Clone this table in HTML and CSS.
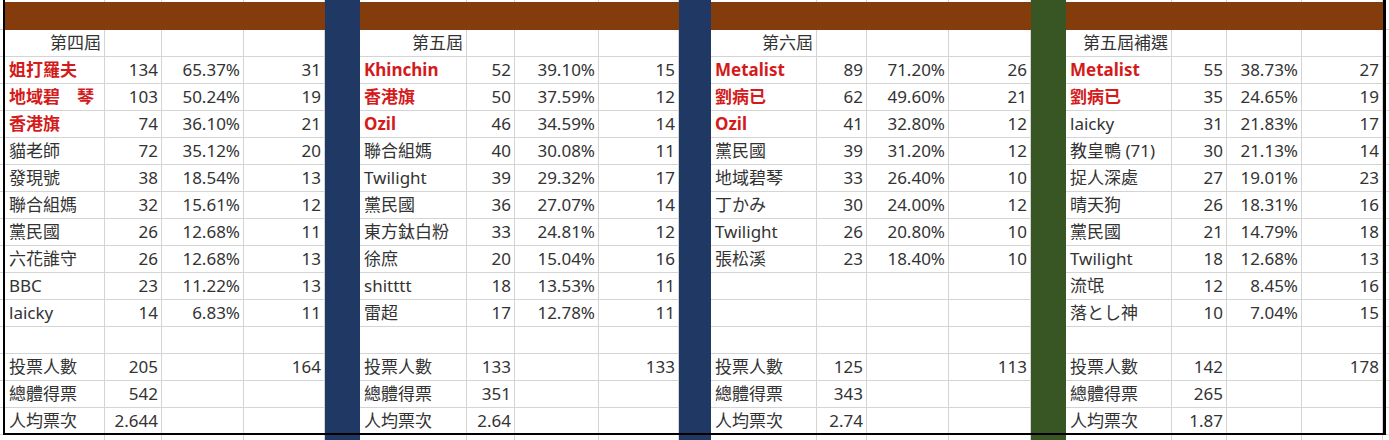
FILE: index.html
```html
<!DOCTYPE html>
<html lang="zh-Hant">
<head>
<meta charset="utf-8">
<title>選舉結果</title>
<link rel="stylesheet" href="styles.css">
</head>
<body>
<main class="wrap">
  <div class="sheet">
    <!-- row 1: top stub -->
    <span class="t s"></span><span class="t"></span><span class="t"></span><span class="t"></span><span class="t"></span>
    <span class="t"></span><span class="t"></span><span class="t"></span><span class="t"></span>
    <span class="t"></span><span class="t"></span><span class="t"></span><span class="t"></span>
    <span class="t"></span><span class="t"></span><span class="t"></span><span class="t"></span>
    <span class="t s"></span>
    <!-- row 2: brown bar row stubs -->
    <span class="s"></span><span class="s"></span>
    <!-- row 3: headers -->
    <span class="s"></span>
    <span>第四屆</span><span></span><span></span><span></span>
    <span>第五屆</span><span></span><span></span><span></span>
    <span>第六屆</span><span></span><span></span><span></span>
    <span>第五屆補選</span><span></span><span></span><span></span>
    <span class="s"></span>
    <!-- data 1 -->
    <span class="s"></span>
    <span class="n w">姐打羅夫</span><span>134</span><span>65.37%</span><span>31</span>
    <span class="n w">Khinchin</span><span>52</span><span>39.10%</span><span>15</span>
    <span class="n w">Metalist</span><span>89</span><span>71.20%</span><span>26</span>
    <span class="n w">Metalist</span><span>55</span><span>38.73%</span><span>27</span>
    <span class="s"></span>
    <!-- data 2 -->
    <span class="s"></span>
    <span class="n w">地域碧　琴</span><span>103</span><span>50.24%</span><span>19</span>
    <span class="n w">香港旗</span><span>50</span><span>37.59%</span><span>12</span>
    <span class="n w">劉病已</span><span>62</span><span>49.60%</span><span>21</span>
    <span class="n w">劉病已</span><span>35</span><span>24.65%</span><span>19</span>
    <span class="s"></span>
    <!-- data 3 -->
    <span class="s"></span>
    <span class="n w">香港旗</span><span>74</span><span>36.10%</span><span>21</span>
    <span class="n w">Ozil</span><span>46</span><span>34.59%</span><span>14</span>
    <span class="n w">Ozil</span><span>41</span><span>32.80%</span><span>12</span>
    <span class="n">laicky</span><span>31</span><span>21.83%</span><span>17</span>
    <span class="s"></span>
    <!-- data 4 -->
    <span class="s"></span>
    <span class="n">貓老師</span><span>72</span><span>35.12%</span><span>20</span>
    <span class="n">聯合組媽</span><span>40</span><span>30.08%</span><span>11</span>
    <span class="n">黨民國</span><span>39</span><span>31.20%</span><span>12</span>
    <span class="n">教皇鴨 (71)</span><span>30</span><span>21.13%</span><span>14</span>
    <span class="s"></span>
    <!-- data 5 -->
    <span class="s"></span>
    <span class="n">發現號</span><span>38</span><span>18.54%</span><span>13</span>
    <span class="n">Twilight</span><span>39</span><span>29.32%</span><span>17</span>
    <span class="n">地域碧琴</span><span>33</span><span>26.40%</span><span>10</span>
    <span class="n">捉人深處</span><span>27</span><span>19.01%</span><span>23</span>
    <span class="s"></span>
    <!-- data 6 -->
    <span class="s"></span>
    <span class="n">聯合組媽</span><span>32</span><span>15.61%</span><span>12</span>
    <span class="n">黨民國</span><span>36</span><span>27.07%</span><span>14</span>
    <span class="n">丁かみ</span><span>30</span><span>24.00%</span><span>12</span>
    <span class="n">晴天狗</span><span>26</span><span>18.31%</span><span>16</span>
    <span class="s"></span>
    <!-- data 7 -->
    <span class="s"></span>
    <span class="n">黨民國</span><span>26</span><span>12.68%</span><span>11</span>
    <span class="n">東方鈦白粉</span><span>33</span><span>24.81%</span><span>12</span>
    <span class="n">Twilight</span><span>26</span><span>20.80%</span><span>10</span>
    <span class="n">黨民國</span><span>21</span><span>14.79%</span><span>18</span>
    <span class="s"></span>
    <!-- data 8 -->
    <span class="s"></span>
    <span class="n">六花誰守</span><span>26</span><span>12.68%</span><span>13</span>
    <span class="n">徐庶</span><span>20</span><span>15.04%</span><span>16</span>
    <span class="n">張松溪</span><span>23</span><span>18.40%</span><span>10</span>
    <span class="n">Twilight</span><span>18</span><span>12.68%</span><span>13</span>
    <span class="s"></span>
    <!-- data 9 -->
    <span class="s"></span>
    <span class="n">BBC</span><span>23</span><span>11.22%</span><span>13</span>
    <span class="n">shitttt</span><span>18</span><span>13.53%</span><span>11</span>
    <span class="n"></span><span></span><span></span><span></span>
    <span class="n">流氓</span><span>12</span><span>8.45%</span><span>16</span>
    <span class="s"></span>
    <!-- data 10 -->
    <span class="s"></span>
    <span class="n">laicky</span><span>14</span><span>6.83%</span><span>11</span>
    <span class="n">雷超</span><span>17</span><span>12.78%</span><span>11</span>
    <span class="n"></span><span></span><span></span><span></span>
    <span class="n">落とし神</span><span>10</span><span>7.04%</span><span>15</span>
    <span class="s"></span>
    <!-- empty row -->
    <span class="s"></span>
    <span></span><span></span><span></span><span></span>
    <span></span><span></span><span></span><span></span>
    <span></span><span></span><span></span><span></span>
    <span></span><span></span><span></span><span></span>
    <span class="s"></span>
    <!-- voters -->
    <span class="s"></span>
    <span class="n">投票人數</span><span>205</span><span></span><span>164</span>
    <span class="n">投票人數</span><span>133</span><span></span><span>133</span>
    <span class="n">投票人數</span><span>125</span><span></span><span>113</span>
    <span class="n">投票人數</span><span>142</span><span></span><span>178</span>
    <span class="s"></span>
    <!-- total votes -->
    <span class="s"></span>
    <span class="n">總體得票</span><span>542</span><span></span><span></span>
    <span class="n">總體得票</span><span>351</span><span></span><span></span>
    <span class="n">總體得票</span><span>343</span><span></span><span></span>
    <span class="n">總體得票</span><span>265</span><span></span><span></span>
    <span class="s"></span>
    <!-- average -->
    <span class="s"></span>
    <span class="n">人均票次</span><span>2.644</span><span></span><span></span>
    <span class="n">人均票次</span><span>2.64</span><span></span><span></span>
    <span class="n">人均票次</span><span>2.74</span><span></span><span></span>
    <span class="n">人均票次</span><span>1.87</span><span></span><span></span>
    <span class="s"></span>
    <!-- bottom stub -->
    <span class="b s"></span><span class="b"></span><span class="b"></span><span class="b"></span><span class="b"></span>
    <span class="b"></span><span class="b"></span><span class="b"></span><span class="b"></span>
    <span class="b"></span><span class="b"></span><span class="b"></span><span class="b"></span>
    <span class="b"></span><span class="b"></span><span class="b"></span><span class="b"></span>
    <span class="b s"></span>

    <div class="bar"></div>
    <div class="sep blue col6"></div>
    <div class="sep blue col11"></div>
    <div class="sep green col16"></div>
  </div>
  <div class="frame"></div>
</main>
</body>
</html>
```
FILE: styles.css
```css
html, body {
  margin: 0;
  padding: 0;
  background: #ffffff;
}

body {
  width: 1389px;
  height: 440px;
  overflow: hidden;
  font-family: "Noto Sans", "Noto Sans CJK TC", sans-serif;
  font-size: 17px;
  color: #333333;
}

.wrap {
  display: grid;
}

.sheet {
  grid-area: 1 / 1;
  display: grid;
  grid-template-columns:
    5px 100px 57px 82px 81px
    35px 107px 48px 84px 80px
    32px 106px 50px 82px 82px
    35px 106px 55px 75px 81px 6px;
  grid-template-rows: 2px 28px 27px repeat(14, 27px) 5px;
}

.sheet > span {
  box-sizing: border-box;
  border-right: 1px solid #d4d4d4;
  border-bottom: 1px solid #d4d4d4;
  padding: 0 3px 0 4px;
  line-height: 26px;
  text-align: right;
  white-space: nowrap;
  overflow: hidden;
}

.sheet > span.n {
  text-align: left;
}

.sheet > span.w {
  color: #d41b1b;
  font-weight: 700;
}

.sheet > span.t,
.sheet > span.b {
  border-bottom: 0;
}

.sheet > span.s {
  border-right: 0;
}

.bar {
  grid-row: 2;
  grid-column: 2 / 21;
  background: #843c0c;
}

.sep {
  grid-row: 1 / -1;
}

.col6 { grid-column: 6; }
.col11 { grid-column: 11; }
.col16 { grid-column: 16; }

.blue { background: #1f3864; }
.green { background: #375623; }

.frame {
  grid-area: 1 / 1;
  align-self: start;
  box-sizing: border-box;
  height: 435px;
  margin: 0 3px;
  border-style: solid;
  border-color: #000000;
  border-width: 0 3px 2px 2px;
}
```
